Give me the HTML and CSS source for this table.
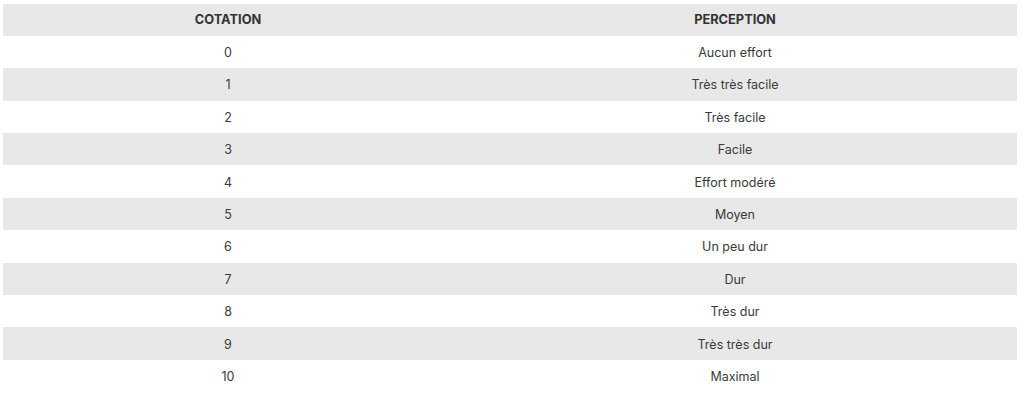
FILE: index.html
```html
<!DOCTYPE html>
<html lang="fr">
<head>
<meta charset="utf-8">
<link rel="stylesheet" href="styles.css">
</head>
<body>
<table class="borg">
  <thead>
    <tr><th class="c1">COTATION</th><th class="c2">PERCEPTION</th></tr>
  </thead>
  <tbody>
    <tr><td>0</td><td>Aucun effort</td></tr>
    <tr><td>1</td><td>Très très facile</td></tr>
    <tr><td>2</td><td>Très facile</td></tr>
    <tr><td>3</td><td>Facile</td></tr>
    <tr><td>4</td><td>Effort modéré</td></tr>
    <tr><td>5</td><td>Moyen</td></tr>
    <tr><td>6</td><td>Un peu dur</td></tr>
    <tr><td>7</td><td>Dur</td></tr>
    <tr><td>8</td><td>Très dur</td></tr>
    <tr><td>9</td><td>Très très dur</td></tr>
    <tr><td>10</td><td>Maximal</td></tr>
  </tbody>
</table>
</body>
</html>
```
FILE: styles.css
```css
html, body {
  margin: 0;
  background: #ffffff;
}
body {
  padding: 3.5px 7px 0 3px;
  font-family: Inter, "Noto Sans", "Liberation Sans", sans-serif;
  font-size: 12.5px;
  color: #3a3a3a;
}
.borg {
  width: 1014px;
  border-collapse: collapse;
  table-layout: fixed;
}
.borg th, .borg td {
  box-sizing: border-box;
  height: 32.4px;
  padding: 0;
  text-align: center;
  vertical-align: middle;
}
.borg td {
  padding-top: 1px;
}
.borg th {
  font-weight: 700;
  font-size: 12.8px;
  color: #333333;
  background: #e8e8e8;
}
.borg .c1 { width: 450px; }
.borg .c2 { width: 564px; }
.borg tbody tr:nth-child(even) td {
  background: #e8e8e8;
}
```
